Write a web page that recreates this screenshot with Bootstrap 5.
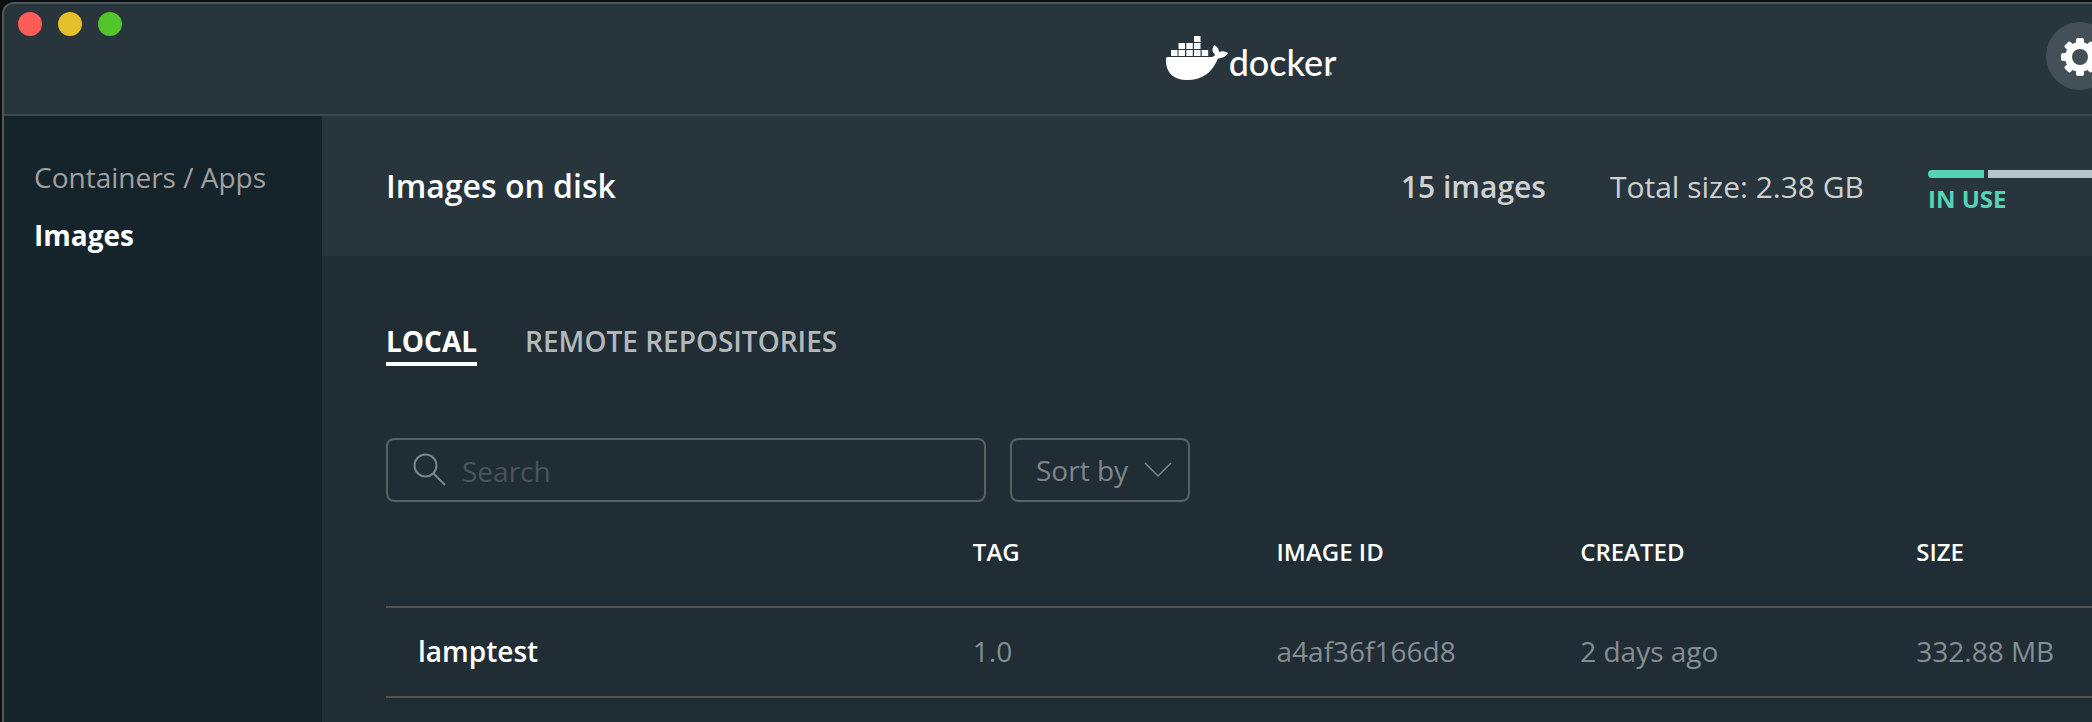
<!DOCTYPE html>
<html lang="en">
<head>
<meta charset="utf-8">
<meta name="viewport" content="width=device-width, initial-scale=1">
<title>Docker Desktop – Images</title>
<link href="https://cdn.jsdelivr.net/npm/bootstrap@5.3.0/dist/css/bootstrap.min.css" rel="stylesheet">
<style>
:root { --bar: #29353c; --page: #212d34; --side: #15232b; --rule: #3d474c; --teal: #55d3b4; }
body { background: #0a0f10; font-family: "Open Sans", sans-serif; font-size: 28px; line-height: 40px; color: #fff; overflow: hidden; }
.app-window { margin: 2px 0 0 2px; border: 2px solid #50595e; border-right: 0; border-bottom: 0; border-top-left-radius: 12px; overflow: hidden; min-height: calc(100vh - 2px); background: var(--page); }
.title-bar { background: var(--bar); height: 112px; padding-bottom: 6px; border-bottom: 2px solid var(--rule); }
.lights { top: 8px; left: 14px; gap: 16px; }
.light { width: 24px; height: 24px; padding: 0; border: 0; border-radius: 50%; }
.light-close { background: #ff5d55; } .light-min { background: #e6c02b; } .light-zoom { background: #53c42c; }
.brand { font-family: Lato, sans-serif; font-size: 36px; font-weight: 500; line-height: 36px; color: #fff; margin-left: 406px; padding-top: 4px; gap: 1px; }
.brand-name { padding-top: 8px; }
.brand-dot { right: 4px; bottom: 5px; width: 3px; height: 3px; border-radius: 50%; background: #aab2b6; }
.settings { width: 68px; height: 68px; padding: 0; border: 0; border-radius: 50%; background: #435058; margin-right: -22px; }
.side { width: 318px; background: var(--side); padding: 41px 30px; gap: 18px; }
.side a { color: #a0a0a0; text-decoration: none; }
.side a.active { color: #fff; font-weight: 700; }
.summary { background: var(--bar); height: 140px; padding-left: 64px; font-size: 30px; color: #d0d0d0; }
.summary h1 { font-size: 32px; font-weight: 600; color: #fff; }
.summary-figure { padding-top: 2px; }
.usage { width: 164px; padding-top: 12px; font-size: 24px; line-height: 30px; font-weight: 700; color: var(--teal); }
.meter { height: 8px; gap: 4px; margin-bottom: 6px; }
.meter-used { width: 56px; background: var(--teal); border-radius: 4px 0 0 4px; }
.meter-free { background: #b8c3c9; }
.body-pane { padding: 65px 0 0 64px; }
.view-tabs { gap: 48px; }
.view-tabs button { border: 0; padding: 0 0 1px; background: none; color: #b4b8bb; font-weight: 600; border-bottom: 4px solid transparent; }
.view-tabs button.active { color: #fff; font-weight: 700; border-bottom-color: #fff; }
.tools { margin-top: 72px; gap: 24px; }
.box { height: 64px; border: 2px solid #596165; border-radius: 8px; background: transparent; color: #7d868b; }
.search { width: 600px; padding: 0 24px; gap: 14px; }
.search input { border: 0; background: none; color: #fff; outline: 0; min-width: 0; padding: 2px 0 0; }
.search input::placeholder { color: #49555b; opacity: 1; }
.sort { padding: 0 16px 0 24px; }
.images { margin-top: 16px; table-layout: fixed; border-collapse: collapse; width: 100%; }
.images th, .images td { padding: 0; border-bottom: 2px solid #555250; }
.images thead th { font-size: 24px; font-weight: 600; height: 89px; padding-bottom: 20px; vertical-align: middle; }
.images tbody th, .images tbody td { height: 90px; padding-bottom: 2px; }
.images tbody th { font-weight: 600; padding-left: 32px; }
.images tbody td { color: #848e94; }
.images .col-wide { width: 34.4%; }
.images .col-mid { width: 17.8%; }
.images .col-date { width: 19.7%; }
</style>
</head>
<body>
<div class="app-window d-flex flex-column">
  <header class="title-bar position-relative d-flex align-items-center justify-content-between flex-shrink-0">
    <div class="lights position-absolute d-flex">
      <button class="light light-close" aria-label="Close"></button>
      <button class="light light-min" aria-label="Minimize"></button>
      <button class="light light-zoom" aria-label="Zoom"></button>
    </div>
    <span class="settings invisible"></span>
    <div class="brand position-relative d-flex align-items-center">
      <svg width="62" height="44" viewBox="0 0 62 44" fill="#fff" aria-hidden="true">
        <path d="M1 21H44Q48 21 49 19Q44 14 48.500 9Q53 12 53 16Q58 14 62 17Q59 22 52 22.500C46 37 36 44 21 44C6 44 -1 35 0 22Z"/>
        <path d="M5 14h6.500v6H5zM12.500 14H19v6h-6.500zM20.300 14h6.500v6h-6.500zM28 14h6.500v6H28zM35.700 14h6.500v6h-6.500zM12.500 7H19v6h-6.500zM20.300 7h6.500v6h-6.500zM28 7h6.500v6H28zM28 0h6.500v6H28z"/>
      </svg>
      <span class="brand-name">docker</span>
      <span class="brand-dot position-absolute"></span>
    </div>
    <button class="settings d-flex align-items-center justify-content-center" aria-label="Settings">
      <svg width="40" height="40" viewBox="-20 -21 40 40" aria-hidden="true">
        <g fill="#fff">
          <g id="spokes"><rect x="-4" y="-19" width="8" height="38" rx="2"/><rect x="-19" y="-4" width="38" height="8" rx="2"/></g>
          <use href="#spokes" transform="rotate(45)"/>
          <circle r="15"/>
        </g>
        <circle r="8" fill="#435058"/>
      </svg>
    </button>
  </header>
  <div class="d-flex flex-grow-1">
    <nav class="side d-flex flex-column flex-shrink-0">
      <a href="#">Containers / Apps</a>
      <a href="#" class="active">Images</a>
    </nav>
    <main class="flex-grow-1">
      <section class="summary d-flex align-items-center">
        <h1 class="mb-0 me-auto">Images on disk</h1>
        <span class="summary-figure fw-semibold me-5 pe-3">15 images</span>
        <span class="summary-figure me-5 pe-3">Total size: 2.38 GB</span>
        <div class="usage">
          <div class="meter d-flex"><div class="meter-used"></div><div class="meter-free flex-grow-1"></div></div>
          IN USE
        </div>
      </section>
      <section class="body-pane">
        <div class="view-tabs d-flex">
          <button class="active">LOCAL</button>
          <button>REMOTE REPOSITORIES</button>
        </div>
        <div class="tools d-flex">
          <label class="box search d-flex align-items-center">
            <svg width="36" height="36" viewBox="0 0 36 36" fill="none" stroke="#7d868b" stroke-width="2" aria-hidden="true"><circle cx="13.500" cy="13.500" r="11"/><path d="M21.500 21.500L33 33"/></svg>
            <input class="flex-grow-1" type="text" placeholder="Search" aria-label="Search">
          </label>
          <button class="box sort d-flex align-items-center gap-3">Sort by
            <svg width="28" height="16" viewBox="0 0 28 16" fill="none" stroke="#7d868b" stroke-width="1.500" aria-hidden="true"><path d="M1 1L14 14L27 1"/></svg>
          </button>
        </div>
        <table class="images">
          <colgroup><col class="col-wide"><col class="col-mid"><col class="col-mid"><col class="col-date"><col></colgroup>
          <thead><tr><th aria-label="Name"></th><th>TAG</th><th>IMAGE ID</th><th>CREATED</th><th>SIZE</th></tr></thead>
          <tbody><tr><th scope="row">lamptest</th><td>1.0</td><td>a4af36f166d8</td><td>2 days ago</td><td>332.88 MB</td></tr></tbody>
        </table>
      </section>
    </main>
  </div>
</div>
<script src="https://cdn.jsdelivr.net/npm/bootstrap@5.3.0/dist/js/bootstrap.bundle.min.js"></script>
</body>
</html>
